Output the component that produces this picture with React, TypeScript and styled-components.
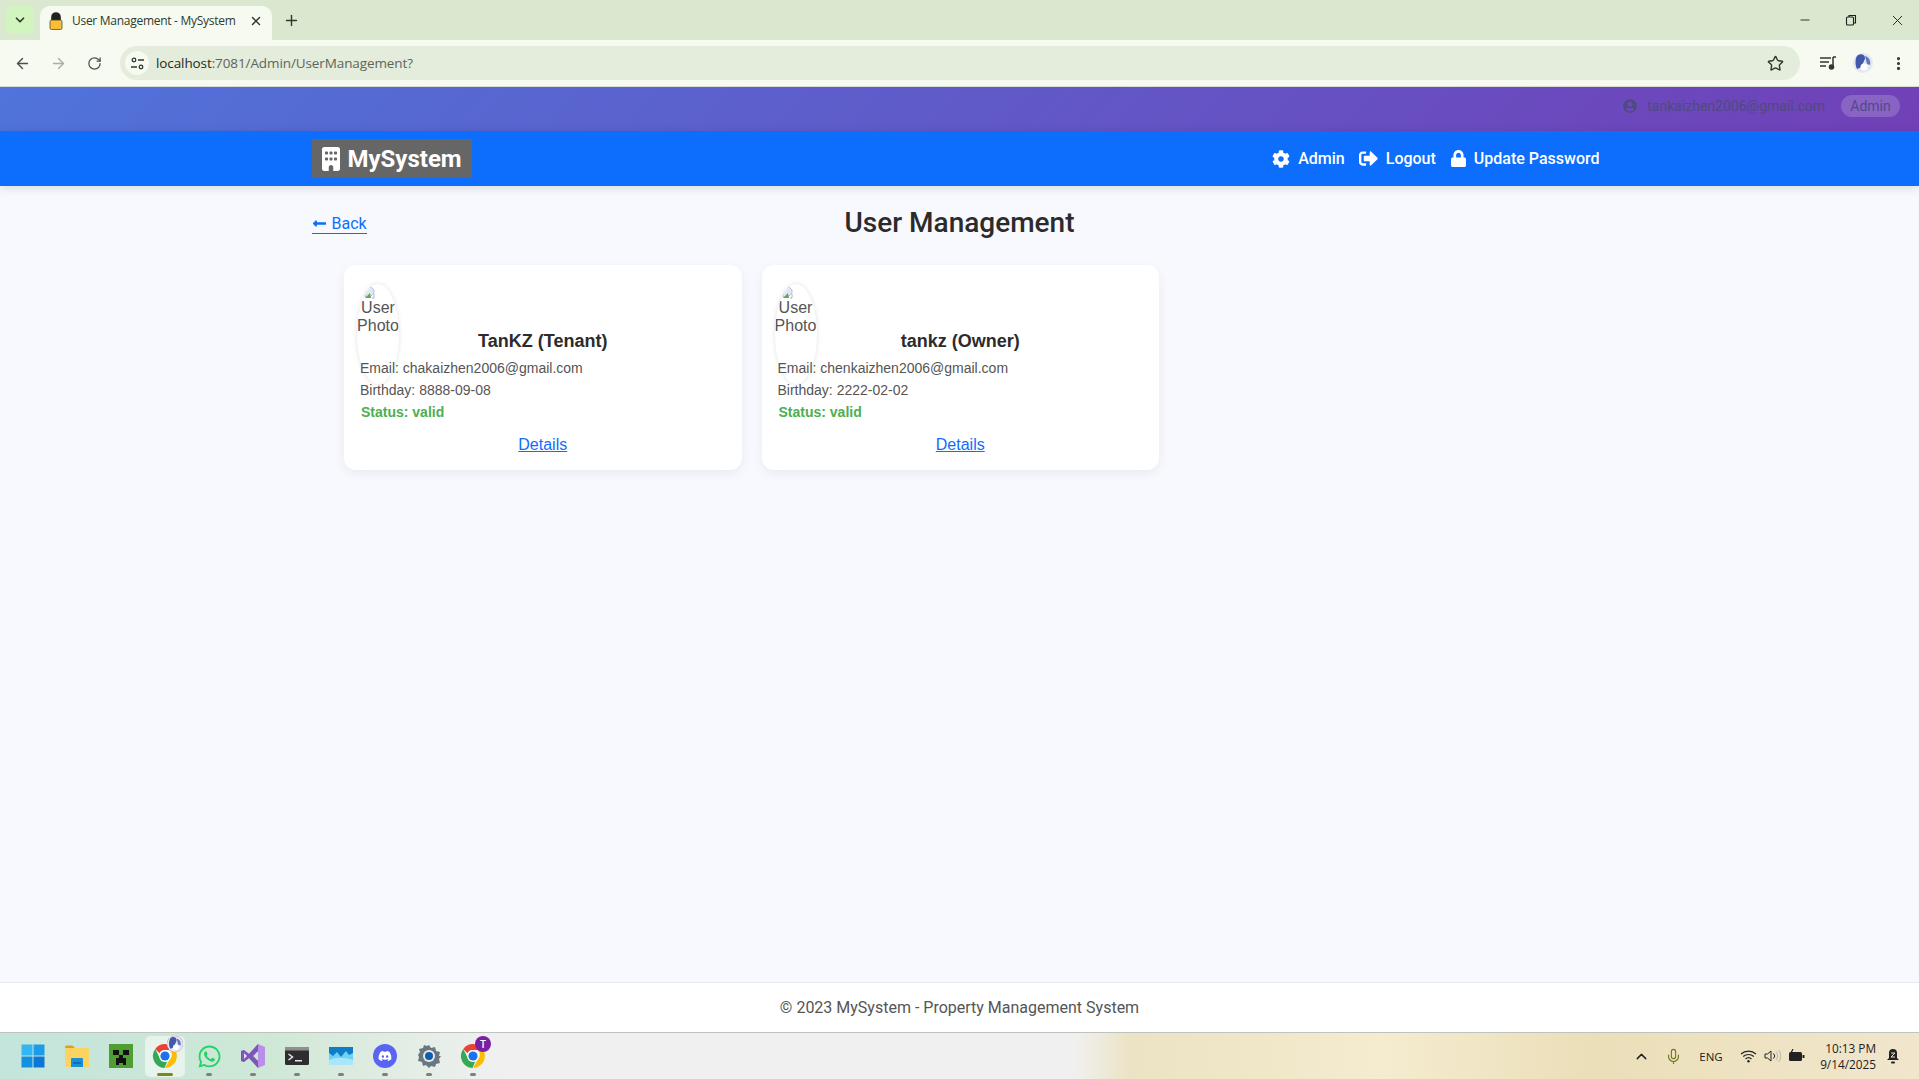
import React from 'react';
import styled, { createGlobalStyle } from 'styled-components';
import {
  ArrowLeft, ArrowRight, RotateCw, Star, X, Plus, ChevronDown, ChevronUp, Minus,
  MoreVertical, Mic,
} from 'lucide-react';
import { FaCog, FaSignOutAlt, FaLock, FaUserCircle, FaLongArrowAltLeft, FaWhatsapp, FaDiscord } from 'react-icons/fa';
import { FaBuilding } from 'react-icons/fa6';

const GlobalStyle = createGlobalStyle`
  html, body { margin: 0; padding: 0; height: 100%; overflow: hidden; }
  body { background: #f8f9fe; font-family: Roboto, "Liberation Sans", sans-serif; }
  * { box-sizing: border-box; }
`;

const Page = styled.div`
  height: 1079px;
  display: flex;
  flex-direction: column;
`;

/* browser chrome */
const TabStrip = styled.div`
  height: 40px;
  flex: none;
  background: #dae8cf;
  display: flex;
  align-items: flex-end;
  padding-left: 6px;
  color: #2f3a2b;
  font-family: "Open Sans", "Noto Sans", sans-serif;
`;
const TabSearch = styled.div`
  width: 28px;
  height: 28px;
  margin: 0 6px 6px 0;
  border-radius: 8px;
  background: #d2f5c0;
  display: flex;
  align-items: center;
  justify-content: center;
`;
const Tab = styled.div`
  width: 232px;
  height: 34px;
  background: #f6faf0;
  border-radius: 10px 10px 0 0;
  display: flex;
  align-items: center;
  padding: 0 9px 5px 9px;
  font-size: 12px;
  letter-spacing: -0.28px;
  span { flex: 1; margin-left: 9px; white-space: nowrap; }
`;
const NewTab = styled.div`
  width: 28px;
  height: 28px;
  margin: 0 0 6px 5px;
  display: flex;
  align-items: center;
  justify-content: center;
`;
const WindowControls = styled.div`
  margin-left: auto;
  margin-right: -1px;
  height: 40px;
  display: flex;
  align-items: center;
  color: #1f1f1f;
`;
const WindowButton = styled.div`
  width: 46px;
  display: flex;
  justify-content: center;
`;
const Toolbar = styled.div`
  height: 47px;
  flex: none;
  background: #f6faf0;
  border-bottom: 1px solid #d8dcd2;
  display: flex;
  align-items: center;
  padding: 0 12px 0 4px;
  color: #48524a;
`;
const NavGlyph = styled.div<{ $dim?: boolean }>`
  width: 36px;
  display: flex;
  justify-content: center;
  color: ${p => (p.$dim ? '#a9b0a6' : '#48524a')};
`;
const Omnibox = styled.div`
  flex: 1;
  height: 34px;
  margin: 0 20px 0 8px;
  border-radius: 17px;
  background: #e4ecdc;
  display: flex;
  align-items: center;
  padding: 0 16px 0 5px;
  font-family: "Open Sans", "Noto Sans", sans-serif;
  font-size: 13.5px;
  letter-spacing: -0.1px;
  color: #5c665a;
  b { font-weight: 400; color: #1f2a1f; }
`;
const SiteChip = styled.div`
  width: 24px;
  height: 24px;
  border-radius: 50%;
  background: #f6faf0;
  margin-right: 7px;
  display: flex;
  align-items: center;
  justify-content: center;
  color: #2f3a2b;
`;
const StarSlot = styled.div`
  margin-left: auto;
  display: flex;
`;
const ToolbarRight = styled.div`
  display: flex;
  align-items: center;
  gap: 17px;
`;

/* app header */
const UserBar = styled.div`
  height: 44px;
  flex: none;
  background: linear-gradient(135deg, #4f74da 0%, #7140b7 100%);
  display: flex;
  align-items: center;
  justify-content: flex-end;
  padding: 0 19px 6px 0;
  color: #52498c;
  font-size: 14px;
`;
const UserEmail = styled.div`
  display: flex;
  align-items: center;
  gap: 10px;
  margin-right: 16px;
  color: #4f4a80;
`;
const RoleBadge = styled.div`
  width: 59px;
  height: 22px;
  border-radius: 11px;
  background: rgba(255, 255, 255, 0.18);
  display: flex;
  align-items: center;
  justify-content: center;
`;
const NavBar = styled.nav`
  height: 55px;
  flex: none;
  background: #0d6efd;
  box-shadow: 0 2px 10px rgba(0, 0, 0, 0.13);
  position: relative;
`;
const Container = styled.div`
  width: 1296px;
  margin: 0 auto;
`;
const NavInner = styled(Container)`
  height: 55px;
  display: flex;
  align-items: center;
  justify-content: space-between;
`;
const Brand = styled.a`
  width: 160px;
  height: 39px;
  background: #666666;
  color: #fff;
  display: flex;
  align-items: center;
  gap: 5px;
  padding-left: 7px;
  font-size: 24px;
  font-weight: 700;
`;
const NavLinks = styled.div`
  display: flex;
  align-items: center;
  gap: 14px;
  padding-right: 8px;
`;
const NavLink = styled.a<{ $tight?: boolean }>`
  display: flex;
  align-items: center;
  gap: ${p => (p.$tight ? '7px' : '8px')};
  color: #fff;
  font-size: 16px;
  font-weight: 500;
`;

/* page content */
const Main = styled.main`
  flex: 1;
  padding-top: 17px;
`;
const TitleRow = styled(Container)`
  display: grid;
  grid-template-columns: 1fr auto 1fr;
  align-items: center;
  height: 38px;
`;
const BackLink = styled.a`
  color: #0d6efd;
  border-bottom: 1px solid #0d6efd;
  font-size: 16px;
  line-height: 18px;
  justify-self: start;
  margin-top: 4px;
  svg { vertical-align: -2px; margin-right: 1px; }
`;
const PageTitle = styled.h1`
  margin: 0;
  font-size: 28px;
  font-weight: 500;
  color: #2b2b2b;
`;
const CardGrid = styled(Container)`
  display: grid;
  grid-template-columns: repeat(3, 1fr);
  gap: 20px;
  padding: 0 31px 0 32.5px;
  margin-top: 24px;
`;
const Card = styled.article`
  height: 205px;
  background: #fff;
  border-radius: 12px;
  box-shadow: 0 4px 12px rgba(0, 0, 0, 0.06);
  padding: 19px 16px 0;
  font-family: "Liberation Sans", Arial, sans-serif;
`;
const Avatar = styled.div`
  width: 42px;
  height: 100px;
  margin-left: -3px;
  border-radius: 50%;
  box-shadow: 0 0 5px rgba(0, 0, 0, 0.12);
  font-size: 16px;
  line-height: 18px;
  color: #555;
  text-align: center;
  overflow: hidden;
  svg { display: block; margin: 2px 0 0 7px; }
`;
const CardName = styled.h3`
  margin: -54px 0 0;
  height: 22px;
  text-align: center;
  font-size: 18px;
  line-height: 22px;
  font-weight: 700;
  color: #2b2b2b;
`;
const InfoLine = styled.p<{ $status?: boolean }>`
  margin: ${p => (p.$status ? '0 0 0 1px' : '0')};
  font-size: 14px;
  line-height: 22px;
  height: 22px;
  color: ${p => (p.$status ? '#4caf50' : '#555')};
  font-weight: ${p => (p.$status ? 700 : 400)};
  &:first-of-type { margin-top: 5px; }
`;
const DetailsLink = styled.a`
  display: block;
  margin-top: 11px;
  text-align: center;
  font-size: 16px;
  line-height: 22px;
  color: #0d6efd;
  text-decoration: underline;
`;
const Footer = styled.footer`
  height: 50px;
  flex: none;
  background: #fff;
  border-top: 1px solid #e3e7f1;
  padding-bottom: 1px;
  display: flex;
  align-items: center;
  justify-content: center;
  font-size: 16px;
  color: #555;
`;

/* windows taskbar */
const TaskBar = styled.div`
  height: 47px;
  flex: none;
  border-top: 1px solid #bfc3bd;
  background: linear-gradient(90deg, #c3e5dc 0%, #cfe8d6 14%, #f0f0f0 26%, #f0f0f0 56%, #ebe3c3 59%, #f5ebcf 72%, #ebdfb9 83%, #f1e6cc 100%);
  display: flex;
  align-items: center;
  justify-content: space-between;
  padding-left: 11px;
  padding-right: 13px;
`;
const TaskIcons = styled.div`
  display: flex;
`;
const TaskButton = styled.div<{ $active?: boolean; $open?: boolean }>`
  position: relative;
  width: 44px;
  height: 46px;
  display: flex;
  align-items: center;
  justify-content: center;
  &::before {
    content: '';
    display: ${p => (p.$active ? 'block' : 'none')};
    position: absolute;
    inset: 4px 3px 3px 3px;
    border-radius: 4px;
    background: rgba(255, 255, 255, 0.55);
    box-shadow: 0 0 0 1px rgba(255, 255, 255, 0.5);
  }
  &::after {
    content: '';
    display: ${p => (p.$open ? 'block' : 'none')};
    position: absolute;
    left: 50%;
    bottom: 3px;
    transform: translateX(-50%);
    width: ${p => (p.$active ? '16px' : '6px')};
    height: 3px;
    border-radius: 2px;
    background: ${p => (p.$active ? '#7d8a10' : '#7f7f7f')};
  }
  svg { position: relative; z-index: 1; }
`;
const IconBadge = styled.div`
  position: absolute;
  z-index: 2;
  top: 3px;
  right: 4px;
  width: 16px;
  height: 16px;
  border-radius: 50%;
  display: flex;
  align-items: center;
  justify-content: center;
  background: #7b1fa2;
  color: #fff;
  font-size: 10px;
  font-weight: 500;
  font-family: Roboto, sans-serif;
`;
const Tray = styled.div`
  display: flex;
  align-items: center;
  color: #222;
  font-family: "Open Sans", "Noto Sans", sans-serif;
  font-size: 11.5px;
`;
const TraySlot = styled.div<{ $w: number }>`
  width: ${p => p.$w}px;
  display: flex;
  justify-content: center;
`;
const Clock = styled.div`
  text-align: right;
  line-height: 16px;
  width: 63px;
  margin: 0 4px 0 2px;
  font-size: 11.8px;
`;

/* drawings */
const LockFavicon = () => (
  <svg width="14" height="18" viewBox="0 0 14 18">
    <path d="M3 8V5a4 4 0 0 1 8 0v3" fill="#222" stroke="#222" strokeWidth="1.6" />
    <rect x="1" y="8" width="12" height="9.5" rx="1.5" fill="#f9bd38" stroke="#3a3a20" strokeWidth=".7" />
  </svg>
);
const TuneIcon = () => (
  <svg width="13" height="13" viewBox="0 0 13 13" fill="none" stroke="#2f3a2b" strokeWidth="1.3">
    <circle cx="3" cy="3" r="1.800" />
    <path d="M7 3h6M0 10h6" />
    <circle cx="10" cy="10" r="1.800" />
  </svg>
);
const QueueMusic = () => (
  <svg width="16" height="14" viewBox="0 0 16 14" fill="none" stroke="#2f3a2b" strokeWidth="1.500">
    <path d="M0 2h11M0 6h9M0 10h6M13 1v10" />
    <path d="M13 1h3" />
    <circle cx="11.500" cy="11" r="2" fill="#2f3a2b" />
  </svg>
);
const BrokenImage = () => (
  <svg width="11" height="13" viewBox="0 0 11 13">
    <path d="M1 1h6l3 3v3L6 11H1z" fill="#dfe7f8" stroke="#a9b4c4" strokeWidth=".8" />
    <path d="M1 12l5-5 1 5z" fill="#6aa84f" />
    <path d="M10 8v4H8" fill="none" stroke="#a9b4c4" />
  </svg>
);
const ProfilePic = ({ size = 20 }: { size?: number }) => (
  <svg width={size} height={size} viewBox="0 0 20 20">
    <circle cx="10" cy="10" r="10" fill="#e5e8f3" />
    <path d="M4 3c3-3 8-2 8 2 0 3-3 5-3 9l-5 2C2 12 2 6 4 3z" fill="#4258a8" />
    <path d="M12 3c4 1 6 5 5 9l-3-1z" fill="#5f76c3" />
    <circle cx="11" cy="14" r="3.5" fill="#fff" />
  </svg>
);
const ChromeLogo = ({ size = 26 }: { size?: number }) => (
  <svg width={size} height={size} viewBox="0 0 48 48">
    <path d="M24 2a22 22 0 0 1 19 11H24a11 11 0 0 0-10 6L6 11A22 22 0 0 1 24 2z" fill="#ea4335" />
    <path d="M43 13a22 22 0 0 1-19 33l9-16a11 11 0 0 0 0-17z" fill="#fbbc04" />
    <path d="M6 11l9 18a11 11 0 0 0 13 5l-5 12A22 22 0 0 1 6 11z" fill="#34a853" />
    <circle cx="24" cy="24" r="11" fill="#fff" />
    <circle cx="24" cy="24" r="8.5" fill="#1a73e8" />
  </svg>
);
const StartLogo = () => (
  <svg width="24" height="24" viewBox="0 0 24 24">
    <rect x="0.5" y="0.5" width="11" height="11" fill="#35b6f2" />
    <rect x="12.5" y="0.5" width="11" height="11" fill="#1c9ce8" />
    <rect x="0.5" y="12.5" width="11" height="11" fill="#1291e0" />
    <rect x="12.5" y="12.5" width="11" height="11" fill="#0a78d4" />
  </svg>
);
const FolderLogo = () => (
  <svg width="26" height="24" viewBox="0 0 26 24">
    <path d="M1 3a1.500 1.500 0 0 1 1.500-1.500h6L11 4h-10z" fill="#d9a21b" />
    <rect x="1" y="4" width="24" height="19" rx="1" fill="#fbd362" />
    <path d="M8 14h10a1 1 0 0 1 1 1v8H7v-8a1 1 0 0 1 1-1z" fill="#1b8fd6" />
    <rect x="9" y="18" width="8" height="2" fill="#0f6fb1" />
  </svg>
);
const CreeperLogo = () => (
  <svg width="24" height="24" viewBox="0 0 24 24">
    <rect width="24" height="24" fill="#4f9e32" />
    <path d="M4 6h6v5H4zM14 6h6v5h-6zM10 11h4v3h3v7h-3v-2h-4v2H7v-7h3z" fill="#111" />
  </svg>
);
const StudioLogo = () => (
  <svg width="24" height="24" viewBox="0 0 24 24">
    <path d="M17 0l7 3v18l-7 3-9-10-5 4-3-1V7l3-1 5 4zM17 7l-5 5 5 5z" fill="#b98ee8" />
    <path d="M17 0L8 10 3 6 0 7v10l3 1 5-4 9 10v-7l-5-5 5-5z" fill="#7c57b5" />
    <path d="M3 9v6l3-3z" fill="#e8dcf7" />
  </svg>
);
const TerminalLogo = () => (
  <svg width="24" height="18" viewBox="0 0 24 18">
    <rect width="24" height="18" rx="1.500" fill="#2d2d2d" />
    <rect width="24" height="3.500" fill="#8f8f8f" />
    <path d="M3.500 7l4 3-4 3" fill="none" stroke="#e6e6e6" strokeWidth="1.500" />
    <rect x="10" y="13" width="7" height="1.500" fill="#e6e6e6" />
  </svg>
);
const PhotosLogo = () => (
  <svg width="24" height="18" viewBox="0 0 24 18">
    <rect width="24" height="18" fill="#0e7cc7" />
    <path d="M0 6l4 3 4-4 4 5 5-6 3 4 4-2v12H0z" fill="#6fd2f5" />
    <path d="M0 13c6-3 16-3 24 0v5H0z" fill="#a9e6fa" />
  </svg>
);
const DiscordBadge = () => (
  <svg width="24" height="24" viewBox="0 0 24 24">
    <circle cx="12" cy="12" r="12" fill="#5865f2" />
    <g transform="translate(5 5)"><FaDiscord size={14} color="#fff" /></g>
  </svg>
);
const SettingsLogo = () => (
  <svg width="24" height="24" viewBox="0 0 24 24">
    <path d="M12 1l2 3 4-1 1 4 4 1-1 4 2 0-2 3 1 4-4 1-1 3-4-1-2 2-3-3-3 1-1-4-4-1 1-4-1-2 2-3-1-3 4-1 1-3 3 1z" fill="#6b7780" />
    <circle cx="12" cy="12" r="6" fill="#e7eaec" />
    <circle cx="12" cy="12" r="4" fill="#0f5ea8" />
  </svg>
);
const WifiIcon = () => (
  <svg width="17" height="14" viewBox="0 0 17 14" fill="none" stroke="#222" strokeWidth="1.200">
    <path d="M1 5a11 11 0 0 1 15 0M3.200 7.500a8 8 0 0 1 10.600 0M5.500 10a4.500 4.500 0 0 1 6 0" />
    <circle cx="8.500" cy="12.300" r="1.200" fill="#222" stroke="none" />
  </svg>
);
const SpeakerIcon = () => (
  <svg width="17" height="14" viewBox="0 0 17 14" fill="none" strokeWidth="1">
    <path d="M1 5h2.500L7 2v10L3.500 9H1z" stroke="#222" />
    <path d="M9.500 4.500a3.500 3.500 0 0 1 0 5" stroke="#222" />
    <path d="M12 2.500a7 7 0 0 1 0 9M14.500 1a9 9 0 0 1 0 12" stroke="#b9b6a8" />
  </svg>
);
const ChargingBattery = () => (
  <svg width="17" height="14" viewBox="0 0 17 14">
    <rect x="1" y="3" width="13" height="9" rx="1.500" fill="#222" />
    <rect x="14.500" y="6" width="2" height="3" fill="#222" />
    <path d="M5 0L2 6h3L3 10" fill="none" stroke="#222" strokeWidth="1.200" />
  </svg>
);
const NotifyBell = () => (
  <svg width="14" height="16" viewBox="0 0 14 16">
    <path d="M7 1a4 4 0 0 1 4 4v5l2 2H1l2-2V5a4 4 0 0 1 4-4z" fill="#222" />
    <rect x="5" y="13.500" width="4" height="2" rx="1" fill="#222" />
    <path d="M5 5h4L5 9h4" fill="none" stroke="#f1e6cb" strokeWidth="1" />
  </svg>
);

const users = [
  { name: 'TanKZ (Tenant)', email: 'chakaizhen2006@gmail.com', birthday: '8888-09-08' },
  { name: 'tankz (Owner)', email: 'chenkaizhen2006@gmail.com', birthday: '2222-02-02' },
];

const App: React.FC = () => {
  return (
    <Page>
      <GlobalStyle />
      <TabStrip>
        <TabSearch><ChevronDown size={14} strokeWidth={3} /></TabSearch>
        <Tab>
          <LockFavicon />
          <span>User Management - MySystem</span>
          <X size={14} strokeWidth={2.5} />
        </Tab>
        <NewTab><Plus size={17} strokeWidth={2} /></NewTab>
        <WindowControls>
          <WindowButton><Minus size={14} strokeWidth={1.5} /></WindowButton>
          <WindowButton>
            <svg width="12" height="12" viewBox="0 0 12 12" fill="none" stroke="#1f1f1f" strokeWidth="1.100">
              <rect x="1.500" y="3" width="7" height="8" rx="1" />
              <path d="M4 3V1.500h6.500V9H8.500" />
            </svg>
          </WindowButton>
          <WindowButton><X size={17} strokeWidth={1.3} /></WindowButton>
        </WindowControls>
      </TabStrip>
      <Toolbar>
        <NavGlyph><ArrowLeft size={17} strokeWidth={2} /></NavGlyph>
        <NavGlyph $dim><ArrowRight size={17} strokeWidth={2} /></NavGlyph>
        <NavGlyph><RotateCw size={15} strokeWidth={2} /></NavGlyph>
        <Omnibox>
          <SiteChip><TuneIcon /></SiteChip>
          <b>localhost</b>:7081/Admin/UserManagement?
          <StarSlot><Star size={17} strokeWidth={2} color="#2f3a2b" /></StarSlot>
        </Omnibox>
        <ToolbarRight>
          <QueueMusic />
          <ProfilePic />
          <MoreVertical size={17} strokeWidth={2.5} color="#2f3a2b" />
        </ToolbarRight>
      </Toolbar>

      <UserBar>
        <UserEmail><FaUserCircle size={14} />tankaizhen2006@gmail.com</UserEmail>
        <RoleBadge>Admin</RoleBadge>
      </UserBar>
      <NavBar>
        <NavInner>
          <Brand><FaBuilding size={24} />MySystem</Brand>
          <NavLinks>
            <NavLink><FaCog size={18} />Admin</NavLink>
            <NavLink><FaSignOutAlt size={19} />Logout</NavLink>
            <NavLink $tight><FaLock size={17} />Update Password</NavLink>
          </NavLinks>
        </NavInner>
      </NavBar>

      <Main>
        <TitleRow>
          <BackLink><FaLongArrowAltLeft size={15} /> Back</BackLink>
          <PageTitle>User Management</PageTitle>
        </TitleRow>
        <CardGrid>
          {users.map(user => (
            <Card key={user.email}>
              <Avatar><BrokenImage />User Photo</Avatar>
              <CardName>{user.name}</CardName>
              <InfoLine>Email: {user.email}</InfoLine>
              <InfoLine>Birthday: {user.birthday}</InfoLine>
              <InfoLine $status>Status: valid</InfoLine>
              <DetailsLink>Details</DetailsLink>
            </Card>
          ))}
        </CardGrid>
      </Main>

      <Footer>© 2023 MySystem - Property Management System</Footer>

      <TaskBar>
        <TaskIcons>
          <TaskButton><StartLogo /></TaskButton>
          <TaskButton><FolderLogo /></TaskButton>
          <TaskButton><CreeperLogo /></TaskButton>
          <TaskButton $active $open><ChromeLogo /><IconBadge><ProfilePic size={16} /></IconBadge></TaskButton>
          <TaskButton $open><FaWhatsapp size={25} color="#25d366" /></TaskButton>
          <TaskButton $open><StudioLogo /></TaskButton>
          <TaskButton $open><TerminalLogo /></TaskButton>
          <TaskButton $open><PhotosLogo /></TaskButton>
          <TaskButton $open><DiscordBadge /></TaskButton>
          <TaskButton $open><SettingsLogo /></TaskButton>
          <TaskButton $open><ChromeLogo /><IconBadge>T</IconBadge></TaskButton>
        </TaskIcons>
        <Tray>
          <TraySlot $w={32}><ChevronUp size={17} strokeWidth={2} /></TraySlot>
          <TraySlot $w={32}><Mic size={17} strokeWidth={1.6} color="#6f7a1f" /></TraySlot>
          <TraySlot $w={44}>ENG</TraySlot>
          <TraySlot $w={30}><WifiIcon /></TraySlot>
          <TraySlot $w={18}><SpeakerIcon /></TraySlot>
          <TraySlot $w={30}><ChargingBattery /></TraySlot>
          <Clock>10:13 PM<br />9/14/2025</Clock>
          <TraySlot $w={26}><NotifyBell /></TraySlot>
        </Tray>
      </TaskBar>
    </Page>
  );
};

export default App;
